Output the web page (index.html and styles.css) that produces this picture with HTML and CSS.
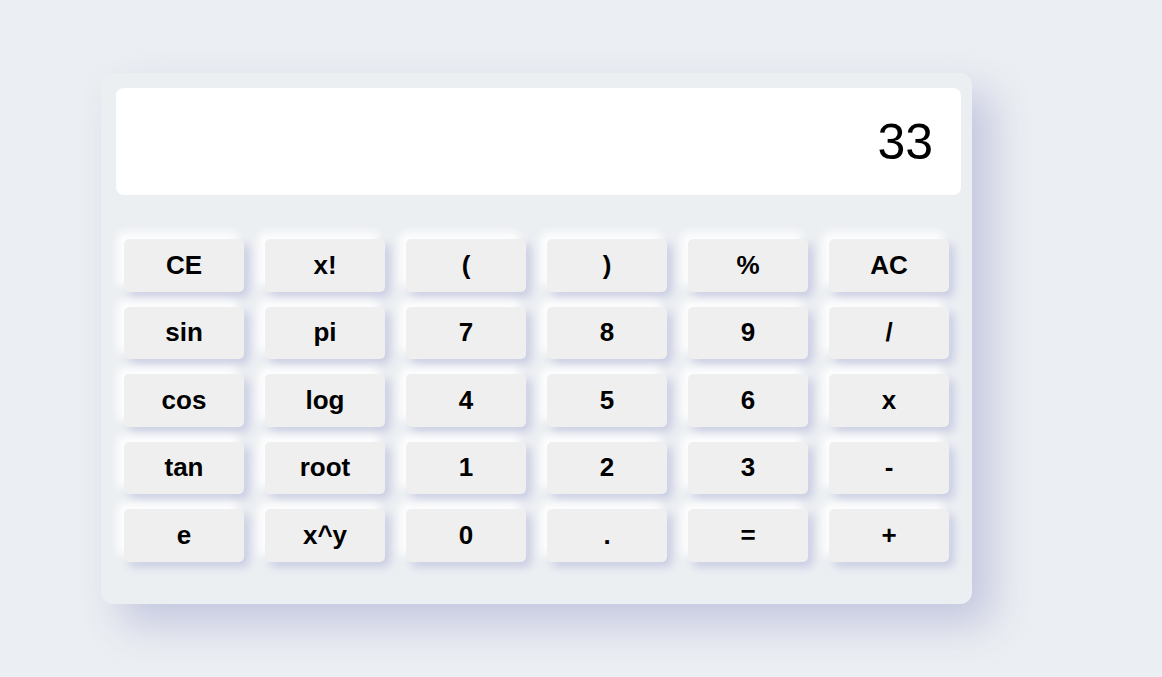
FILE: index.html
```html
<!DOCTYPE html>
<html lang="en">
<head>
<meta charset="utf-8">
<title>Calculator</title>
<link rel="stylesheet" href="styles.css">
</head>
<body>
<div class="calculator">
  <div class="display"><span class="value">33</span></div>
  <div class="keys">
    <button class="key">CE</button>
    <button class="key">x!</button>
    <button class="key">(</button>
    <button class="key">)</button>
    <button class="key">%</button>
    <button class="key">AC</button>
    <button class="key">sin</button>
    <button class="key">pi</button>
    <button class="key">7</button>
    <button class="key">8</button>
    <button class="key">9</button>
    <button class="key">/</button>
    <button class="key">cos</button>
    <button class="key">log</button>
    <button class="key">4</button>
    <button class="key">5</button>
    <button class="key">6</button>
    <button class="key">x</button>
    <button class="key">tan</button>
    <button class="key">root</button>
    <button class="key">1</button>
    <button class="key">2</button>
    <button class="key">3</button>
    <button class="key">-</button>
    <button class="key">e</button>
    <button class="key">x^y</button>
    <button class="key">0</button>
    <button class="key">.</button>
    <button class="key">=</button>
    <button class="key">+</button>
  </div>
</div>
</body>
</html>
```

FILE: styles.css
```css
html, body {
  margin: 0;
  padding: 0;
}

body {
  background: #ebeef2;
  font-family: "Liberation Sans", Arial, sans-serif;
  width: 1162px;
  height: 677px;
  overflow: hidden;
  padding: 73px 0 0 101px;
  box-sizing: border-box;
}

.calculator {
  width: 871px;
  height: 531px;
  box-sizing: border-box;
  background: #eceff2;
  border-radius: 12px;
  padding: 15px 11px 0 15px;
  box-shadow: 20px 20px 40px #c4c7df;
}

.display {
  height: 107px;
  background: #ffffff;
  border-radius: 8px;
  display: flex;
  align-items: center;
  justify-content: flex-end;
  padding-right: 28px;
}

.value {
  font-size: 50px;
  color: #000;
  line-height: 1;
}

.keys {
  margin: 44px 0 0 8px;
  display: grid;
  grid-template-columns: repeat(6, 120px);
  grid-auto-rows: 52.5px;
  column-gap: 21px;
  row-gap: 15px;
}

.key {
  border: none;
  background: #efefef;
  border-radius: 5px;
  font-family: "Liberation Sans", Arial, sans-serif;
  font-weight: bold;
  font-size: 26px;
  color: #000;
  padding: 0;
  box-shadow: -6px -6px 10px #ffffff, 5px 5px 10px #c8cbe2;
}
```
